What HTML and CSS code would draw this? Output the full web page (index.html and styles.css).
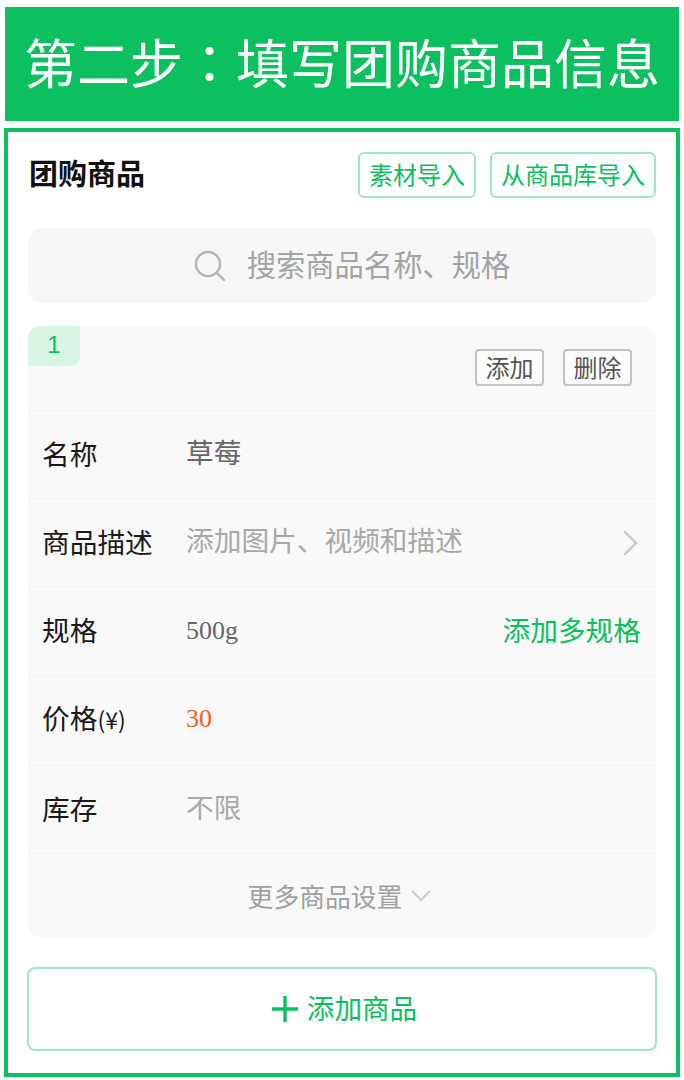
FILE: index.html
```html
<!DOCTYPE html>
<html lang="zh-CN">
<head>
    <meta charset="UTF-8">
    <title>第二步&#xFF1A;填写团购商品信息</title>
    <link rel="stylesheet" href="styles.css">
</head>
<body>
    <header class="banner">第二步<span class="colon" lang="zh-TW">&#xFF1A;</span>填写团购商品信息</header>
    <main class="panel">
        <div class="panel-head">
            <h2>团购商品</h2>
            <div class="head-actions">
                <a class="outline-btn">素材导入</a>
                <a class="outline-btn">从商品库导入</a>
            </div>
        </div>
        <div class="search">
            <svg class="search-icon" width="32" height="32" viewBox="0 0 32 32" fill="none" stroke="#b3b3b3" stroke-width="2.4" stroke-linecap="round">
                <circle cx="14" cy="14" r="12"/>
                <path d="M23 23l7 7"/>
            </svg>
            <span>搜索商品名称、规格</span>
        </div>
        <section class="goods">
            <span class="goods-index">1</span>
            <div class="goods-actions">
                <a class="small-btn">添加</a>
                <a class="small-btn">删除</a>
            </div>
            <div class="row">
                <span class="row-label">名称</span>
                <span class="row-value">草莓</span>
            </div>
            <div class="row">
                <span class="row-label">商品描述</span>
                <span class="row-value muted">添加图片、视频和描述</span>
                <svg class="chevron" width="16" height="28" viewBox="0 0 16 28" fill="none" stroke="#c8c8c8" stroke-width="2.2">
                    <path d="M2 2l12 12L2 26"/>
                </svg>
            </div>
            <div class="row row-spec">
                <span class="row-label">规格</span>
                <span class="row-value serif">500g</span>
                <a class="row-link">添加多规格</a>
            </div>
            <div class="row row-price">
                <span class="row-label">价格<small>(¥)</small></span>
                <span class="row-value serif price">30</span>
            </div>
            <div class="row">
                <span class="row-label">库存</span>
                <span class="row-value muted">不限</span>
            </div>
            <div class="more">
                <span>更多商品设置</span>
                <svg width="20" height="12" viewBox="0 0 20 12" fill="none" stroke="#cdcdcd" stroke-width="2">
                    <path d="M1 1l9 9 9-9"/>
                </svg>
            </div>
        </section>
        <a class="add-goods">
            <svg width="28" height="28" viewBox="0 0 28 28" fill="none" stroke="#07c160" stroke-width="3.4">
                <path d="M14 1v26M1 14h26"/>
            </svg>
            <span>添加商品</span>
        </a>
    </main>
</body>
</html>
```

FILE: styles.css
```css
/* page frame */
body {
    margin: 0;
    padding: 7px 4px 3px 4px;
    background-color: #fff;
    font-family: "Noto Sans CJK SC", "Noto Sans", sans-serif;
    color: #1a1a1a;
}
a {
    text-decoration: none;
}

.banner {
    height: 114px;
    margin: 0 1px 7px 1px;
    background-color: #0cc05f;
    color: #fff;
    font-size: 53px;
    line-height: 108px;
    text-align: center;
    white-space: nowrap;
}
.banner .colon {
    font-family: "Noto Sans CJK TC", sans-serif; /* centred colon */
}

.panel {
    height: 949px;
    box-sizing: border-box;
    border: 4px solid #0cc05f;
    padding: 20px 20px 0 20px;
}

/* head */
.panel-head {
    display: flex;
    justify-content: space-between;
    align-items: center;
    height: 46px;
}
.panel-head h2 {
    margin: 0 0 6px 1px;
    font-size: 29px;
    font-weight: 700;
    color: #111;
}
.head-actions {
    display: flex;
    gap: 14px;
}
.outline-btn {
    box-sizing: border-box;
    height: 46px;
    padding: 0 9px;
    border: 2px solid #a0e6bf;
    border-radius: 6px;
    color: #07c160;
    font-size: 24px;
    line-height: 40px;
}

/* search */
.search {
    display: flex;
    justify-content: center;
    align-items: center;
    gap: 21px;
    height: 75px;
    margin-top: 30px;
    padding-left: 20px;
    box-sizing: border-box;
    background-color: #f7f7f7;
    border-radius: 14px;
    color: #a3a3a3;
    font-size: 29.3px;
}
.search span {
    margin-bottom: 6px;
}

/* goods card */
.goods {
    position: relative;
    margin-top: 23px;
    background-color: #f9f9f9;
    border-radius: 14px;
    height: 612px;
}
.goods-index {
    position: absolute;
    top: 0;
    left: 0;
    width: 52px;
    height: 40px;
    background-color: #d8f5e4;
    border-radius: 12px 0 10px 0;
    color: #07c160;
    font-family: "Liberation Sans", sans-serif;
    font-size: 24px;
    line-height: 38px;
    text-align: center;
}
.goods-actions {
    display: flex;
    justify-content: flex-end;
    gap: 19px;
    height: 84px;
    box-sizing: border-box;
    padding: 23px 24px 0 0;
}
.small-btn {
    box-sizing: border-box;
    width: 69px;
    height: 37px;
    border: 2px solid #c4c4c4;
    border-radius: 4px;
    background-color: #fcfcfc;
    color: #555;
    font-size: 24px;
    line-height: 31px;
    text-align: center;
}
.row {
    display: flex;
    align-items: center;
    box-sizing: border-box;
    height: 88px;
    padding: 0 15px 4px 14px;
    border-top: 1px solid #f2f2f2;
    font-size: 27.7px;
}
.row-spec {
    height: 89px;
}
.row-price {
    height: 90px;
    padding-bottom: 8px;
}
.row-label {
    width: 144px;
    flex-shrink: 0;
    color: #1a1a1a;
}
.row-label small {
    font-size: 23px;
}
.row-value {
    flex: 1;
    margin-bottom: 4px;
    color: #666;
}
.row-value.muted {
    color: #a8a8a8;
}
.row-value.serif {
    margin: 4px 0 0 0;
    font-family: "Liberation Serif", serif;
    font-size: 26px;
}
.row-value.price {
    color: #fa5c1e;
}
.chevron {
    margin: 4px 3px 0 0;
}
.row-link {
    color: #07c160;
}
.more {
    display: flex;
    justify-content: center;
    align-items: center;
    gap: 9px;
    box-sizing: border-box;
    height: 85px;
    padding-right: 5px;
    border-top: 1px solid #f2f2f2;
    color: #a0a0a0;
    font-size: 25.8px;
}
.more span {
    margin-bottom: 2px;
}

/* add button */
.add-goods {
    display: flex;
    justify-content: center;
    align-items: center;
    gap: 8px;
    box-sizing: border-box;
    height: 84px;
    margin: 29px -1px 0 -1px;
    padding-left: 4px;
    border: 2px solid #a0e6bf;
    border-radius: 8px;
    color: #07c160;
    font-size: 27.6px;
}
.add-goods span {
    margin-bottom: 4px;
}
```
